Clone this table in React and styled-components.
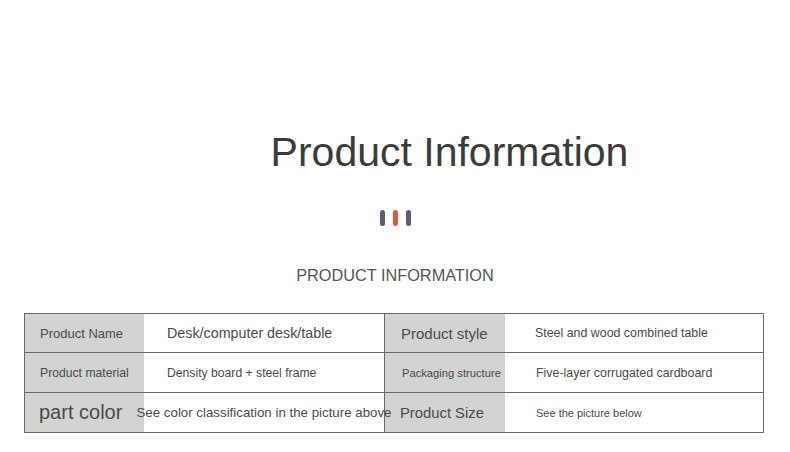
import React from 'react';
import styled, { createGlobalStyle } from 'styled-components';

const GlobalStyle = createGlobalStyle`
  html, body {
    margin: 0;
    padding: 0;
    background: #ffffff;
    font-family: 'Liberation Sans', Arial, sans-serif;
  }
`;

const Page = styled.div`
  width: 790px;
  height: 452px;
  display: flex;
  flex-direction: column;
  align-items: center;
  overflow: hidden;
`;

const Title = styled.h1`
  margin: 127px 0 0 109px;
  font-size: 41px;
  font-weight: 400;
  line-height: 50px;
  color: #3b3b3b;
`;

const Bars = styled.div`
  display: flex;
  gap: 8px;
  margin-top: 33px;
`;

const Bar = styled.span`
  width: 5px;
  height: 16px;
  border-radius: 3px;
  background: ${props => props.color};
`;

const Subtitle = styled.h2`
  margin: 39px 0 0;
  font-size: 16.3px;
  font-weight: 400;
  line-height: 20px;
  color: #555555;
`;

const Table = styled.div`
  align-self: flex-start;
  margin: 28px 0 0 24px;
  display: grid;
  grid-template-columns: 119px 241px 120px 259px;
  grid-auto-rows: 39px 40px 40px;
  border-top: 1px solid #6a6a6a;
  border-left: 1px solid #6a6a6a;
`;

const Cell = styled.div`
  display: flex;
  align-items: center;
  justify-content: ${props => (props.center ? 'center' : 'flex-start')};
  padding-left: ${props => props.pad || 0}px;
  background: ${props => (props.label ? '#d3d3d3' : '#ffffff')};
  border-bottom: 1px solid #6a6a6a;
  border-right: ${props => (props.edge ? '1px solid #6a6a6a' : 'none')};
  font-size: ${props => props.size}px;
  color: #4a4a4a;
  white-space: nowrap;
  overflow: visible;
  position: relative;
  z-index: ${props => (props.label ? 0 : 1)};
`;

const rows = [
  [
    { text: 'Product Name', size: 13, pad: 15, label: true },
    { text: 'Desk/computer desk/table', size: 14.3, pad: 23 },
    { text: 'Product style', size: 15, pad: 16, label: true },
    { text: 'Steel and wood combined table', size: 12.4, pad: 30 },
  ],
  [
    { text: 'Product material', size: 12.2, pad: 15, label: true },
    { text: 'Density board + steel frame', size: 12.2, pad: 23 },
    { text: 'Packaging structure', size: 11.2, pad: 17, label: true },
    { text: 'Five-layer corrugated cardboard', size: 12.4, pad: 31 },
  ],
  [
    { text: 'part color', size: 20, pad: 14, label: true },
    { text: 'See color classification in the picture above', size: 13.3, center: true },
    { text: 'Product Size', size: 14.8, pad: 15, label: true },
    { text: 'See the picture below', size: 11, pad: 31 },
  ],
];

const App = () => (
  <Page>
    <GlobalStyle />
    <Title>Product Information</Title>
    <Bars>
      <Bar color="#5b5d76" />
      <Bar color="#d2603f" />
      <Bar color="#5b5d76" />
    </Bars>
    <Subtitle>PRODUCT INFORMATION</Subtitle>
    <Table>
      {rows.map((row, r) =>
        row.map((c, i) => (
          <Cell
            key={`${r}-${i}`}
            label={c.label}
            size={c.size}
            pad={c.pad}
            center={c.center}
            edge={i === 1 || i === 3}
          >
            {c.text}
          </Cell>
        ))
      )}
    </Table>
  </Page>
);

export default App;
